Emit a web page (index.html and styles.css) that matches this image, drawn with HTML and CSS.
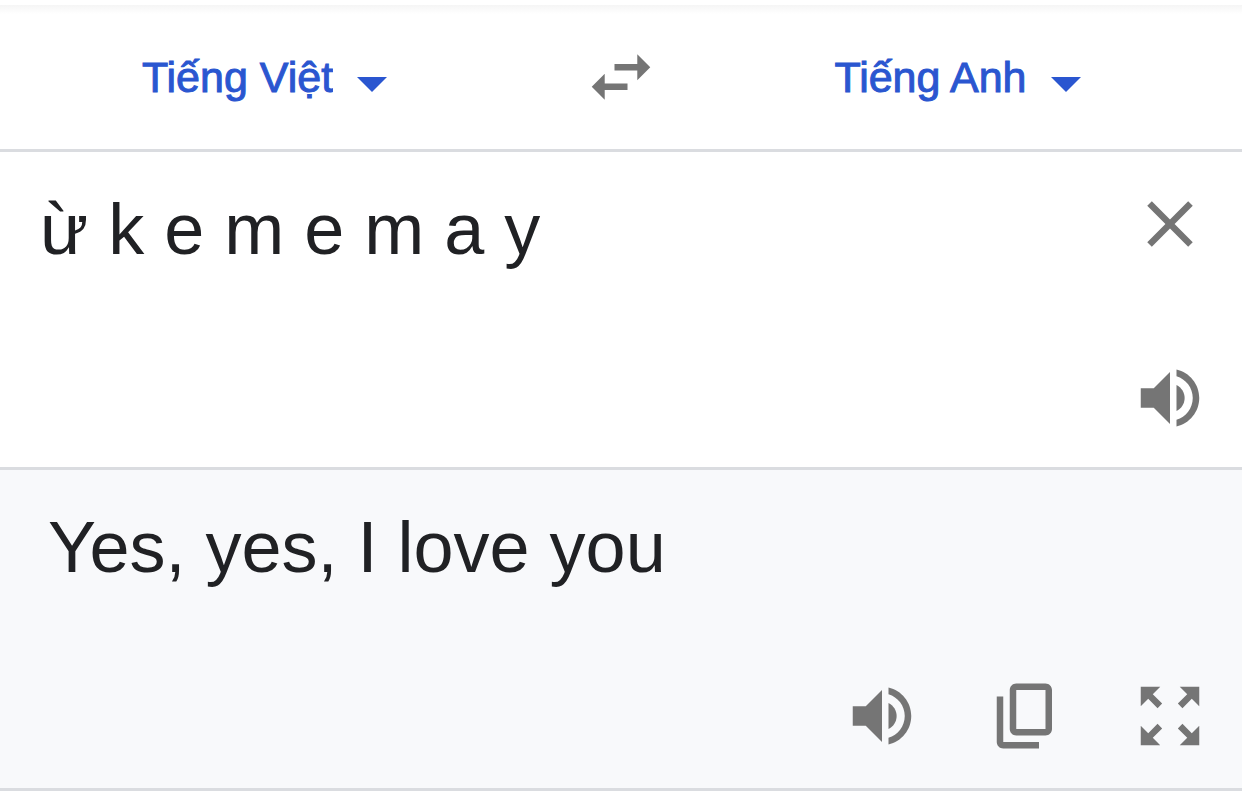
FILE: index.html
```html
<!DOCTYPE html>
<html lang="vi">
<head>
    <meta charset="UTF-8">
    <meta name="viewport" content="width=device-width, initial-scale=1.0">
    <title>Tiếng Việt - Tiếng Anh</title>
    <link rel="stylesheet" href="styles.css">
</head>
<body>
    <header class="languages">
        <div class="picker">
            <select class="picker-select" aria-label="Ngôn ngữ nguồn">
                <option selected>Tiếng Việt</option>
                <option>Tiếng Anh</option>
            </select>
            <svg class="caret" viewBox="0 0 30 15" aria-hidden="true"><path d="M0 0h30L15 15z"/></svg>
        </div>
        <button type="button" class="icon-button" aria-label="Hoán đổi ngôn ngữ">
            <svg class="icon" viewBox="0 0 24 24"><path d="M6.99 11L3 15l3.99 4v-3H14v-2H6.99v-3zM21 9l-3.99-4v3H10v2h7.01v3L21 9z"/></svg>
        </button>
        <div class="picker">
            <select class="picker-select" aria-label="Ngôn ngữ đích">
                <option>Tiếng Việt</option>
                <option selected>Tiếng Anh</option>
            </select>
            <svg class="caret" viewBox="0 0 30 15" aria-hidden="true"><path d="M0 0h30L15 15z"/></svg>
        </div>
    </header>

    <main class="translator">
        <section class="source">
            <textarea class="source-text" aria-label="Văn bản nguồn" spellcheck="false">ừ k e m e m a y</textarea>
            <div class="source-actions">
                <button type="button" class="icon-button" aria-label="Xóa văn bản">
                    <svg class="icon" viewBox="0 0 24 24"><path d="M19 6.41L17.59 5 12 10.59 6.41 5 5 6.41 10.59 12 5 17.59 6.41 19 12 13.41 17.59 19 19 17.59 13.41 12z"/></svg>
                </button>
                <button type="button" class="icon-button" aria-label="Nghe văn bản nguồn">
                    <svg class="icon" viewBox="0 0 24 24"><path d="M3 9v6h4l5 5V4L7 9H3z"/><path d="M14 7.97v8.05c1.48-.73 2.5-2.25 2.5-4.02s-1.02-3.29-2.5-4.03z"/><path d="M14 3.23v2.06c2.89.86 5 3.54 5 6.71s-2.11 5.85-5 6.71v2.06c4.01-.91 7-4.49 7-8.77s-2.99-7.86-7-8.77z"/></svg>
                </button>
            </div>
        </section>

        <section class="result">
            <p class="result-text" lang="en">Yes, yes, I love you</p>
            <div class="result-actions">
                <button type="button" class="icon-button" aria-label="Nghe bản dịch">
                    <svg class="icon" viewBox="0 0 24 24"><path d="M3 9v6h4l5 5V4L7 9H3z"/><path d="M14 7.97v8.05c1.48-.73 2.5-2.25 2.5-4.02s-1.02-3.29-2.5-4.03z"/><path d="M14 3.23v2.06c2.89.86 5 3.54 5 6.71s-2.11 5.85-5 6.71v2.06c4.01-.91 7-4.49 7-8.77s-2.99-7.86-7-8.77z"/></svg>
                </button>
                <button type="button" class="icon-button" aria-label="Sao chép bản dịch">
                    <svg class="icon" viewBox="0 0 24 24"><path fill-rule="evenodd" d="M9 2h9c1.1 0 2 .9 2 2v12c0 1.1-.9 2-2 2H9c-1.1 0-2-.9-2-2V4c0-1.1.9-2 2-2zm0 2v12h9V4H9z"/><path d="M3 6h2v14h11v2H5c-1.1 0-2-.9-2-2V6z"/></svg>
                </button>
                <button type="button" class="icon-button" aria-label="Toàn màn hình">
                    <svg class="icon" viewBox="0 0 24 24"><path d="M15 3l2.3 2.3-2.89 2.87 1.42 1.42L18.7 6.7 21 9V3h-6zM3 9l2.3-2.3 2.87 2.89 1.42-1.42L6.7 5.3 9 3H3v6zm6 12l-2.3-2.3 2.89-2.87-1.42-1.42L5.3 17.3 3 15v6h6zm12-6l-2.3 2.3-2.87-2.89-1.42 1.42 2.89 2.87L15 21h6v-6z"/></svg>
                </button>
            </div>
        </section>
    </main>
</body>
</html>
```
FILE: styles.css
```css
* {
    box-sizing: border-box;
}

body {
    display: flex;
    flex-direction: column;
    min-height: 100vh;
    margin: 0;
    background-color: #fff;
    color: #202124;
    font-family: "Liberation Sans", Arial, sans-serif;
}

/* Language bar */
.languages {
    display: grid;
    grid-template-columns: 1fr auto 1fr;
    align-items: center;
    column-gap: 33px;
    padding: 33px 0;
    border-top: 5px solid #fff;
    border-bottom: 3px solid #dadce0;
    background: linear-gradient(#f5f5f5, #fff 9px) padding-box;
}

.picker {
    position: relative;
    justify-self: center;
    margin-right: 20px;
}

.picker-select {
    appearance: none;
    field-sizing: content;
    padding: 0 54px 0 0;
    border: none;
    background: none;
    color: #2a56d0;
    font-family: inherit;
    font-size: 43px;
    line-height: 56px;
    -webkit-text-stroke: 1px #2a56d0;
    cursor: pointer;
}

.caret {
    position: absolute;
    top: 28px;
    right: 0;
    width: 30px;
    height: 15px;
    fill: #2a56d0;
    pointer-events: none;
}

/* Icons */
.icon-button {
    display: block;
    padding: 0;
    border: none;
    background: none;
    cursor: pointer;
}

.icon {
    display: block;
    width: 78px;
    height: 78px;
    fill: #757575;
}

/* Panels */
.translator {
    display: flex;
    flex: 1;
    flex-direction: column;
}

.source {
    display: flex;
    padding: 33px 33px 30px 40px;
    border-bottom: 3px solid #dadce0;
}

.source-text {
    flex: 1;
    min-width: 0;
    padding: 0;
    border: none;
    outline: none;
    resize: none;
    background: none;
    color: inherit;
    font-family: inherit;
    font-size: 72px;
    line-height: 88px;
}

.source-actions {
    display: flex;
    flex-direction: column;
    gap: 96px;
}

.result {
    display: flex;
    flex: 1;
    flex-direction: column;
    padding: 33px 33px 33px 48px;
    border-bottom: 3px solid #dadce0;
    background-color: #f8f9fb;
}

.result-text {
    margin: 0;
    font-size: 72px;
    line-height: 88px;
}

.result-actions {
    display: flex;
    justify-content: flex-end;
    gap: 66px;
    margin-top: auto;
}
```
